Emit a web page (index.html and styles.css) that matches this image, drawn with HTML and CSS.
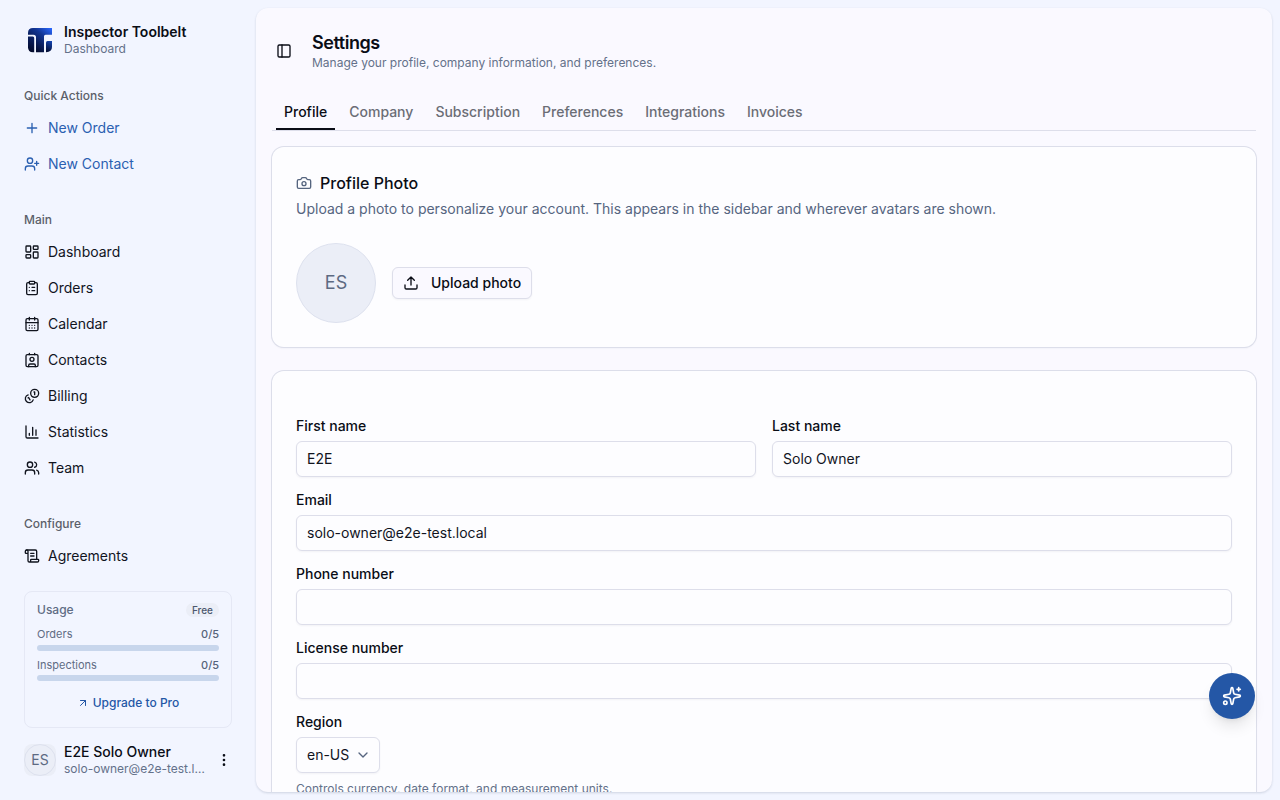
FILE: index.html
```
<!DOCTYPE html>
<html lang="en">
<head>
<meta charset="utf-8">
<title>Settings - Inspector Toolbelt</title>
<link rel="stylesheet" href="styles.css">
</head>
<body>
<div class="app">
  <aside class="sidebar">
    <div class="brand">
      <svg class="logo" viewBox="0 0 32 32">
        <defs>
          <linearGradient id="brandTop" gradientUnits="userSpaceOnUse" x1="9" y1="24" x2="26" y2="3"><stop offset="0" stop-color="#040c30"/><stop offset="0.6" stop-color="#123594"/><stop offset="1" stop-color="#2a68ff"/></linearGradient>
          <linearGradient id="brandLow" gradientUnits="userSpaceOnUse" x1="6" y1="27" x2="14" y2="10"><stop offset="0" stop-color="#030a2b"/><stop offset="1" stop-color="#0d2878"/></linearGradient>
          <linearGradient id="brandEnd" gradientUnits="userSpaceOnUse" x1="22" y1="28" x2="28" y2="16"><stop offset="0" stop-color="#030a2b"/><stop offset="1" stop-color="#164ac0"/></linearGradient>
        </defs>
        <path fill="url(#brandTop)" d="M4 10.800V9q0-5 5-5H28V10.800H21.500Q20 10.800 20 12.300V28.200H12V13.300Q12 10.800 9.500 10.800Z"/>
        <path fill="url(#brandLow)" d="M4 12.500H8.800Q10.200 12.500 10.200 14V28.200H9q-5 0-5-5Z"/>
        <path fill="url(#brandEnd)" d="M22 28.200V18.500Q22 17 23.500 17H28V23q0 5-6 5.200Z"/>
      </svg>
      <div class="stack"><span class="strong">Inspector Toolbelt</span><span class="muted small">Dashboard</span></div>
    </div>
    <nav class="nav">
      <section class="group">
        <h2>Quick Actions</h2>
        <a class="item accent"><svg class="icon" viewBox="0 0 24 24"><path d="M5 12h14M12 5v14"/></svg>New Order</a>
        <a class="item accent"><svg class="icon" viewBox="0 0 24 24"><path d="M16 21v-2a4 4 0 0 0-4-4H6a4 4 0 0 0-4 4v2"/><circle cx="9" cy="7" r="4"/><path d="M19 8v6M22 11h-6"/></svg>New Contact</a>
      </section>
      <section class="group">
        <h2>Main</h2>
        <a class="item"><svg class="icon" viewBox="0 0 24 24"><rect width="7" height="9" x="3" y="3" rx="1"/><rect width="7" height="5" x="14" y="3" rx="1"/><rect width="7" height="9" x="14" y="12" rx="1"/><rect width="7" height="5" x="3" y="16" rx="1"/></svg>Dashboard</a>
        <a class="item"><svg class="icon" viewBox="0 0 24 24"><rect width="8" height="4" x="8" y="2" rx="1"/><path d="M16 4h2a2 2 0 0 1 2 2v14a2 2 0 0 1-2 2H6a2 2 0 0 1-2-2V6a2 2 0 0 1 2-2h2M12 11h4M12 16h4M8 11h.01M8 16h.01"/></svg>Orders</a>
        <a class="item"><svg class="icon" viewBox="0 0 24 24"><path d="M8 2v4M16 2v4"/><rect width="18" height="18" x="3" y="4" rx="2"/><path d="M3 10h18M8 14h.01M12 14h.01M16 14h.01M8 18h.01M12 18h.01M16 18h.01"/></svg>Calendar</a>
        <a class="item"><svg class="icon" viewBox="0 0 24 24"><path d="M16 2v2M8 2v2M7 22v-2a2 2 0 0 1 2-2h6a2 2 0 0 1 2 2v2"/><circle cx="12" cy="11" r="3"/><rect width="18" height="18" x="3" y="4" rx="2"/></svg>Contacts</a>
        <a class="item"><svg class="icon" viewBox="0 0 24 24"><path d="M13.744 17.736a6 6 0 1 1-7.48-7.48M15 6h1v4M6.134 14.768l.866-.5 2 3.464"/><circle cx="16" cy="8" r="6"/></svg>Billing</a>
        <a class="item"><svg class="icon" viewBox="0 0 24 24"><path d="M3 3v16a2 2 0 0 0 2 2h16M18 17V9M13 17V5M8 17v-3"/></svg>Statistics</a>
        <a class="item"><svg class="icon" viewBox="0 0 24 24"><path d="M16 21v-2a4 4 0 0 0-4-4H6a4 4 0 0 0-4 4v2M16 3.128a4 4 0 0 1 0 7.744M22 21v-2a4 4 0 0 0-3-3.870"/><circle cx="9" cy="7" r="4"/></svg>Team</a>
      </section>
      <section class="group">
        <h2>Configure</h2>
        <a class="item"><svg class="icon" viewBox="0 0 24 24"><path d="M15 12h-5M15 8h-5M19 17V5a2 2 0 0 0-2-2H4"/><path d="M8 21h12a2 2 0 0 0 2-2v-1a1 1 0 0 0-1-1H11a1 1 0 0 0-1 1v1a2 2 0 1 1-4 0V5a2 2 0 1 0-4 0v2a1 1 0 0 0 1 1h3"/></svg>Agreements</a>
      </section>
    </nav>
    <section class="usage">
      <div class="usage-head"><span>Usage</span><span class="badge">Free</span></div>
      <div class="meter"><div class="meter-row first"><span>Orders</span><span class="count">0/5</span></div><div class="track"></div></div>
      <div class="meter"><div class="meter-row"><span>Inspections</span><span class="count">0/5</span></div><div class="track"></div></div>
      <a class="upgrade"><svg class="icon tiny" viewBox="0 0 24 24"><path d="M7 7h10v10M7 17 17 7"/></svg>Upgrade to Pro</a>
    </section>
    <div class="user">
      <div class="avatar-box"><div class="avatar">ES</div></div>
      <div class="stack user-text"><span class="strong medium">E2E Solo Owner</span><span class="muted small clip">solo-owner@e2e-test.local</span></div>
      <svg class="icon dots" viewBox="0 0 24 24"><circle cx="12" cy="12" r="1"/><circle cx="12" cy="5" r="1"/><circle cx="12" cy="19" r="1"/></svg>
    </div>
  </aside>
  <main class="panel">
    <header class="top">
      <svg class="icon" viewBox="0 0 24 24"><rect width="18" height="18" x="3" y="3" rx="2"/><path d="M9 3v18"/></svg>
      <div class="titles"><h1>Settings</h1><p>Manage your profile, company information, and preferences.</p></div>
    </header>
    <nav class="tabs">
      <a class="tab active">Profile</a><a class="tab">Company</a><a class="tab">Subscription</a><a class="tab">Preferences</a><a class="tab">Integrations</a><a class="tab">Invoices</a>
    </nav>
    <section class="card photo">
      <h3><svg class="icon slate" viewBox="0 0 24 24"><path d="M13.997 4a2 2 0 0 1 1.760 1.050l.486.9A2 2 0 0 0 18.003 7H20a2 2 0 0 1 2 2v9a2 2 0 0 1-2 2H4a2 2 0 0 1-2-2V9a2 2 0 0 1 2-2h1.997a2 2 0 0 0 1.759-1.048l.489-.904A2 2 0 0 1 10.004 4z"/><circle cx="12" cy="13" r="3"/></svg>Profile Photo</h3>
      <p class="desc">Upload a photo to personalize your account. This appears in the sidebar and wherever avatars are shown.</p>
      <div class="photo-row">
        <div class="avatar large">ES</div>
        <button class="upload"><svg class="icon" viewBox="0 0 24 24"><path d="M12 3v12M17 8l-5-5-5 5M21 15v4a2 2 0 0 1-2 2H5a2 2 0 0 1-2-2v-4"/></svg>Upload photo</button>
      </div>
    </section>
    <form class="card form">
      <div class="two">
        <label class="field">First name<input value="E2E"></label>
        <label class="field">Last name<input value="Solo Owner"></label>
      </div>
      <label class="field">Email<input value="solo-owner@e2e-test.local"></label>
      <label class="field">Phone number<input></label>
      <label class="field">License number<input></label>
      <div class="field">Region
        <div class="select">en-US<svg class="icon slate" viewBox="0 0 24 24"><path d="m6 9 6 6 6-6"/></svg></div>
        <span class="hint">Controls currency, date format, and measurement units.</span>
      </div>
    </form>
  </main>
</div>
<button class="fab"><svg class="icon" viewBox="0 0 24 24"><path d="M11.017 2.814a1 1 0 0 1 1.966 0l1.051 5.558a2 2 0 0 0 1.594 1.594l5.558 1.051a1 1 0 0 1 0 1.966l-5.558 1.051a2 2 0 0 0-1.594 1.594l-1.051 5.558a1 1 0 0 1-1.966 0l-1.051-5.558a2 2 0 0 0-1.594-1.594l-5.558-1.051a1 1 0 0 1 0-1.966l5.558-1.051a2 2 0 0 0 1.594-1.594zM20 2v4M22 4h-4"/><circle cx="4" cy="20" r="2"/></svg></button>
</body>
</html>
```
FILE: styles.css
```
* { box-sizing: border-box; }
body { margin: 0; font: 14px/20px Inter, sans-serif; color: #0a0d16; background: #f2f5ff; overflow: hidden; -webkit-font-smoothing: antialiased; }
h1, h2, h3, p { margin: 0; }
.app { display: flex; height: 800px; padding: 8px 8px 8px 0; }
.icon { width: 16px; height: 16px; flex: none; fill: none; stroke: currentColor; stroke-width: 2; stroke-linecap: round; stroke-linejoin: round; }
.slate { color: #56657f; }
.muted { color: #64718a; }
.small { font-size: 12px; line-height: 16px; }

.sidebar { width: 256px; flex: none; display: flex; flex-direction: column; padding: 0 24px; }
.brand { display: flex; align-items: center; gap: 8px; height: 64px; flex: none; }
.logo { width: 32px; height: 32px; }
.stack { display: flex; flex-direction: column; min-width: 0; }
.strong { font-weight: 600; line-height: 17.5px; }
.medium { font-weight: 500; }
.nav { display: flex; flex-direction: column; flex: none; gap: 20px; height: 512px; padding-top: 8px; overflow: hidden; }
.group { display: flex; flex-direction: column; gap: 4px; padding-bottom: 4px; }
.group h2 { font-size: 12px; line-height: 16px; font-weight: 500; color: #5b5f69; padding: 8px 0; height: 32px; margin-bottom: -4px; }
.item { display: flex; align-items: center; gap: 8px; height: 32px; color: #11141e; }
.accent { color: #2b60b1; }
.usage { margin-top: 7px; height: 137px; border: 1px solid #e5e8f5; border-radius: 8px; padding: 9px 12px; display: flex; flex-direction: column; font-size: 11px; line-height: 16px; color: #5f6c84; }
.usage-head { display: flex; justify-content: space-between; align-items: center; font-size: 12px; font-weight: 500; height: 18px; margin-bottom: 7px; }
.badge { font-size: 10px; line-height: 14px; padding: 0 6px; border-radius: 7px; background: #ebeef7; color: #4b586e; }
.meter { height: 31px; }
.meter-row { display: flex; justify-content: space-between; height: 18px; line-height: 17px; }
.meter-row.first { height: 19px; }
.count { font-weight: 500; color: #56637a; }
.track { height: 6px; border-radius: 3px; background: #c8d6ec; }
.upgrade { display: flex; justify-content: center; align-items: center; gap: 4px; margin-top: 5px; font-size: 12px; line-height: 20px; font-weight: 500; color: #2457a6; }
.tiny { width: 12px; height: 12px; }
.user { display: flex; align-items: center; gap: 8px; height: 64px; }
.avatar-box { width: 32px; height: 32px; flex: none; background: #ebeef7; border-radius: 8px; }
.avatar { width: 32px; height: 32px; border: 1px solid #dde1ee; border-radius: 50%; background: #ebeef7; color: #5d6a82; display: flex; align-items: center; justify-content: center; }
.user-text { flex: 1; }
.clip { max-width: 144px; overflow: hidden; white-space: nowrap; text-overflow: ellipsis; }
.dots { color: #0a0d16; }

.panel { flex: 1; min-width: 0; overflow: hidden; border-radius: 12px; background: #faf9ff; box-shadow: 0 1px 3px #20305018, 0 1px 2px #20305014; padding: 0 16px; }
.top { display: flex; align-items: center; gap: 20px; height: 86px; padding-left: 4px; }
.titles { padding-top: 2px; }
.titles h1 { font-size: 18px; line-height: 20px; font-weight: 600; letter-spacing: -.45px; }
.titles p { font-size: 12px; line-height: 16px; color: #64718a; margin-top: 2px; }
.tabs { display: flex; gap: 6px; height: 37px; padding: 0 4px; border-bottom: 1px solid #dddeea; }
.tab { height: 36px; padding: 8px; border-bottom: 2px solid transparent; font-weight: 500; line-height: 20px; color: #6b6d76; }
.active { color: #0a0d16; border-color: #0a0d16; }
.card { margin-top: 16px; background: #fdfdff; border-radius: 12px; box-shadow: 0 0 0 1px #dcdeea, 0 1px 2px #2030501a; }
.photo { padding: 24px; height: 200px; }
.photo h3 { display: flex; align-items: center; gap: 8px; font-size: 16px; line-height: 24px; font-weight: 500; }
.desc { margin-top: 4px; color: #56657f; }
.photo-row { display: flex; align-items: center; gap: 16px; margin-top: 24px; }
.large { width: 80px; height: 80px; font-size: 18px; }
.upload { display: flex; align-items: center; gap: 12px; height: 32px; padding: 0 10px; width: 140px; border: 1px solid #dddeea; border-radius: 6px; background: #faf9ff; color: #0a0d16; font: 500 14px/20px Inter, sans-serif; white-space: nowrap; box-shadow: 0 1px 2px #2030500d; }
.form { margin-top: 24px; padding: 48px 24px 24px; display: flex; flex-direction: column; gap: 16px; }
.two { display: grid; grid-template-columns: 1fr 1fr; gap: 16px; }
.field { display: flex; flex-direction: column; gap: 8px; font-weight: 500; line-height: 14px; }
.field input, .select { height: 36px; border: 1px solid #dddeea; border-radius: 6px; padding: 0 10px; background: #fdfdff; color: #11141e; font: 400 14px/20px Inter, sans-serif; box-shadow: 0 1px 2px #2030500d; outline: 0; }
.field input { padding-bottom: 2px; }
.select { display: flex; align-items: center; justify-content: space-between; width: 84px; padding-right: 8px; }
.hint { font-size: 12px; line-height: 16px; font-weight: 400; color: #64718a; }
.fab { position: absolute; left: 1209px; top: 673px; width: 46px; height: 46px; padding: 0; display: flex; align-items: center; justify-content: center; border: 0; border-radius: 50%; background: #2457a6; color: #fff; box-shadow: 0 10px 15px -3px #0000001a, 0 4px 6px -4px #0000001a; }
.fab .icon { width: 20px; height: 20px; }
```
